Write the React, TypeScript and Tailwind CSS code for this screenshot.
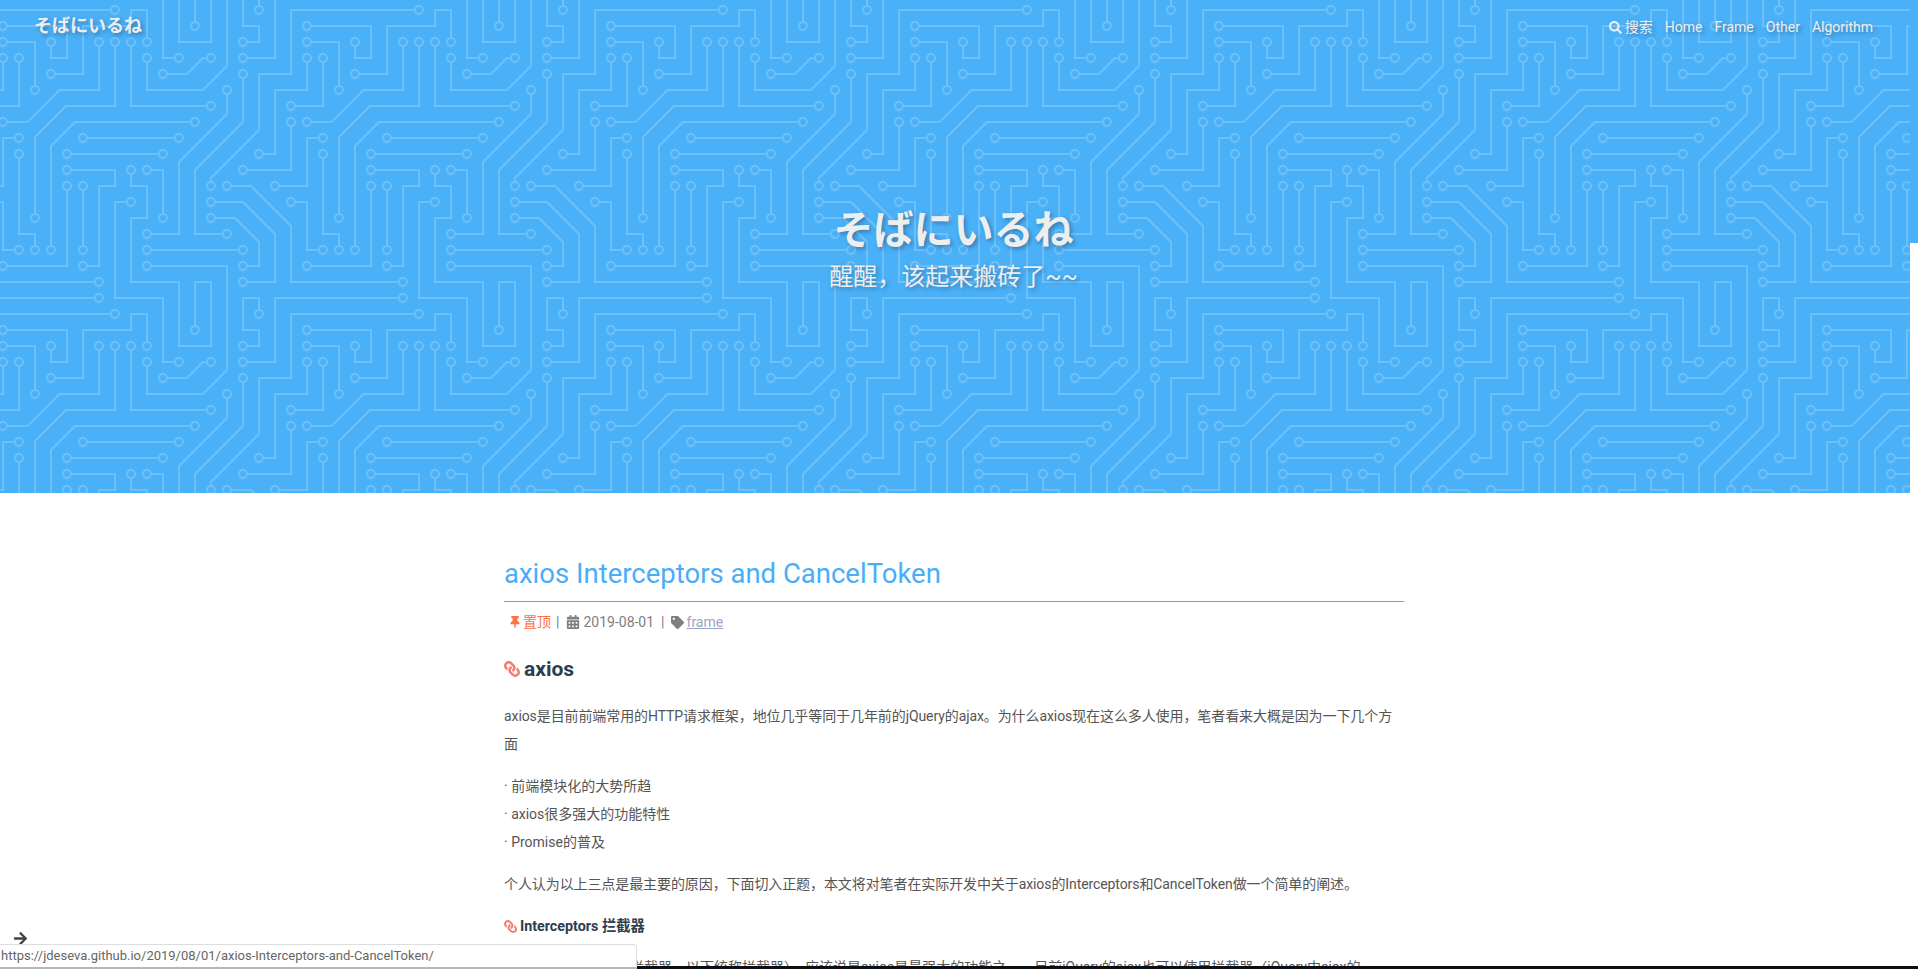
import { FaArrowRight, FaCalendarAlt, FaLink, FaSearch, FaTag, FaThumbtack } from "react-icons/fa";

const FONT = "font-['Roboto','Noto_Sans_CJK_SC',sans-serif]";
const JP_FONT = "font-['Noto_Sans_CJK_JP','Noto_Sans_CJK_SC',sans-serif]";
const SHADOW = "[text-shadow:2px_2px_4px_rgba(0,0,0,0.3)]";

const CIRCUIT =
  "M44.1 224a5 5 0 1 1 0 2H0v-2h44.1zm160 48a5 5 0 1 1 0 2H82v-2h122.1zm57.8-46a5 5 0 1 1 0-2H304v2h-42.1zm0 16a5 5 0 1 1 0-2H304v2h-42.1zm6.2-114a5 5 0 1 1 0 2h-86.2a5 5 0 1 1 0-2h86.2zm-256-48a5 5 0 1 1 0 2H0v-2h12.1zm185.8 34a5 5 0 1 1 0-2h86.2a5 5 0 1 1 0 2h-86.2zM258 12.1a5 5 0 1 1-2 0V0h2v12.1zm-64 208a5 5 0 1 1-2 0v-54.2a5 5 0 1 1 2 0v54.2zm48-198.2V80h62v2h-64V21.9a5 5 0 1 1 2 0zm16 16V64h46v2h-48V37.9a5 5 0 1 1 2 0zm-128 96V208h16v12.1a5 5 0 1 1-2 0V210h-16v-76.1a5 5 0 1 1 2 0zm-5.9-21.9a5 5 0 1 1 0 2H114v48H85.9a5 5 0 1 1 0-2H112v-48h12.1zm-6.2 130a5 5 0 1 1 0-2H176v-74.1a5 5 0 1 1 2 0V242h-60.1zm-16-64a5 5 0 1 1 0-2H114v48h10.1a5 5 0 1 1 0 2H112v-48h-10.1zM66 284.1a5 5 0 1 1-2 0V274H50v30h-2v-32h18v12.1zM236.1 176a5 5 0 1 1 0 2H226v94h48v32h-2v-30h-48v-98h12.1zm25.8-30a5 5 0 1 1 0-2H274v44.1a5 5 0 1 1-2 0V146h-10.1zm-64 96a5 5 0 1 1 0-2H208v-80h16v-14h-42.1a5 5 0 1 1 0-2H226v18h-16v80h-12.1zm86.2-210a5 5 0 1 1 0 2H272V0h2v32h10.1zM98 101.9V146H53.9a5 5 0 1 1 0-2H96v-42.1a5 5 0 1 1 2 0zM53.9 34a5 5 0 1 1 0-2H80V0h2v34H53.9zm60.1 3.9V66H82v64H69.9a5 5 0 1 1 0-2H80V64h32V37.9a5 5 0 1 1 2 0zM101.9 82a5 5 0 1 1 0-2H128V37.9a5 5 0 1 1 2 0V82h-28.1zm16-64a5 5 0 1 1 0-2H146v44.1a5 5 0 1 1-2 0V18h-26.1zm102.2 270a5 5 0 1 1 0 2H98v14h-2v-16h124.1zM242 149.9V160h16v34h-16v62h48v48h-2v-46h-48v-66h16v-30h-16v-12.1a5 5 0 1 1 2 0zM53.9 18a5 5 0 1 1 0-2H64V2H48V0h18v18H53.9zm112 32a5 5 0 1 1 0-2H192V0h50v2h-48v48h-28.1zm-48-48a5 5 0 0 1-9.8-2h2.07a3 3 0 1 0 5.66 0H178v34h-18V21.9a5 5 0 1 1 2 0V32h14V2h-58.1zm0 96a5 5 0 1 1 0-2H137l32-32h39V21.9a5 5 0 1 1 2 0V66h-40.17l-32 32H117.9zm28.1 90.1a5 5 0 1 1-2 0v-76.51L175.59 80H224V21.9a5 5 0 1 1 2 0V82h-49.59L146 112.41v75.69zm16 32a5 5 0 1 1-2 0v-99.51L184.59 96H300.1a5 5 0 0 1 3.9-3.9v2.07a3 3 0 0 0 0 5.66v2.07a5 5 0 0 1-3.9-3.9H185.41L162 121.41v98.69zm-144-64a5 5 0 1 1-2 0v-3.51l48-48V48h32V0h2v50H66v55.41l-48 48v2.69zM50 53.9v43.51l-48 48V208h26.1a5 5 0 1 1 0 2H0v-65.41l48-48V53.9a5 5 0 1 1 2 0zm-16 16V89.41l-34 34v-2.82l32-32V69.9a5 5 0 1 1 2 0zM12.1 32a5 5 0 1 1 0 2H9.41L0 43.41V40.6L8.59 32h3.51zm265.8 18a5 5 0 1 1 0-2h18.69l7.41-7.41v2.82L297.41 50H277.9zm-16 160a5 5 0 1 1 0-2H288v-71.41l16-16v2.82l-14 14V210h-28.1zm-208 32a5 5 0 1 1 0-2H64v-22.59L40.59 194H21.9a5 5 0 1 1 0-2H41.41L66 216.59V242H53.9zm150.2 14a5 5 0 1 1 0 2H96v-56.6L56.6 162H37.9a5 5 0 1 1 0-2h19.5L98 200.6V256h106.1zm-150.2 2a5 5 0 1 1 0-2H80v-46.59L48.59 178H21.9a5 5 0 1 1 0-2H49.41L82 208.59V258H53.9zM34 39.8v1.61L9.41 66H0v-2h8.59L32 40.59V0h2v39.8zM2 300.1a5 5 0 0 1 3.9 3.9H3.83A3 3 0 0 0 0 302.17V256h18v48h-2v-46H2v42.1zM34 241v63h-2v-62H0v-2h34v1zM17 18H0v-2h16V0h2v18h-1zm273-2h14v2h-16V0h2v16zm-32 273v15h-2v-14h-14v14h-2v-16h18v1zM0 92.1A5.02 5.02 0 0 1 6 97a5 5 0 0 1-6 4.9v-2.07a3 3 0 1 0 0-5.66V92.1zM80 272h2v32h-2v-32zm37.9 32h-2.07a3 3 0 0 0-5.66 0h-2.07a5 5 0 0 1 9.8 0zM5.9 0A5.02 5.02 0 0 1 0 5.9V3.83A3 3 0 0 0 3.83 0H5.9zm294.2 0h2.07A3 3 0 0 0 304 3.83V5.9a5 5 0 0 1-3.9-5.9zm3.9 300.1v2.07a3 3 0 0 0-1.83 1.83h-2.07a5 5 0 0 1 3.9-3.9z";

// centres of the pads, punched out of the traces above
const PADS = [
  [49, 225], [209, 273], [257, 225], [257, 241], [273, 129], [177, 129], [17, 81], [193, 113], [289, 113],
  [257, 17], [193, 225], [193, 161], [241, 17], [257, 33], [145, 225], [129, 129], [129, 113], [81, 161],
  [113, 241], [177, 161], [97, 177], [129, 225], [65, 289], [241, 177], [257, 145], [273, 193], [193, 241],
  [177, 145], [289, 33], [49, 145], [97, 97], [49, 33], [65, 129], [113, 33], [97, 81], [129, 33], [113, 17],
  [145, 65], [225, 289], [241, 145], [49, 17], [161, 49], [161, 17], [113, 97], [209, 17], [145, 193],
  [225, 17], [161, 225], [17, 161], [49, 49], [33, 209], [33, 65], [17, 33], [273, 49], [257, 209], [49, 241],
  [17, 193], [209, 257], [33, 161], [49, 257], [17, 177],
];
const PAD_HOLES = PADS.map(([x, y]) => `M${x} ${y + 3}a3 3 0 1 0 0-6 3 3 0 0 0 0 6z`).join("");

function CircuitPattern() {
  return (
    <svg className="absolute inset-0 h-full w-full" aria-hidden="true">
      <defs>
        <pattern id="circuit" width="304" height="304" x="194" y="25" patternUnits="userSpaceOnUse">
          <path d={CIRCUIT + PAD_HOLES} fill="#ffffff" fillOpacity="0.2" fillRule="evenodd" />
        </pattern>
      </defs>
      <rect width="100%" height="100%" fill="url(#circuit)" />
    </svg>
  );
}

function Hero() {
  return (
    <header className={`relative h-[493px] shrink-0 bg-[#4ab0f7] text-[#eeeeee] ${FONT}`}>
      <CircuitPattern />
      <div className={`relative flex items-start justify-between pl-[34px] pr-[37px] ${SHADOW}`}>
        <span className={`mt-[11px] text-[18px] font-bold leading-[26px] ${JP_FONT}`}>そばにいるね</span>
        <nav className="mt-[16px] flex gap-[12px] text-[14px] leading-[22px]">
          <span className="flex items-center gap-[3px]">
            <FaSearch className="h-[13px] w-[13px]" />
            搜索
          </span>
          <span>Home</span>
          <span>Frame</span>
          <span>Other</span>
          <span>Algorithm</span>
        </nav>
      </div>
      <div className={`relative mt-[163px] flex flex-col items-center pr-[3px] ${SHADOW}`}>
        <h1 className={`text-[40px] font-bold leading-[52px] ${JP_FONT}`}>そばにいるね</h1>
        <p className="mt-[7px] text-[24px] leading-[34px]">醒醒，该起来搬砖了~~</p>
      </div>
    </header>
  );
}

function Heading({ size, children }: { size: "lg" | "sm"; children: string }) {
  const large = size === "lg";
  return (
    <h2
      className={
        large
          ? "mt-[17px] flex items-center gap-[4px] text-[21px] font-bold leading-[32px] text-[#2c3e50]"
          : "mt-[14px] flex items-center gap-[3px] text-[14.3px] font-bold leading-[28px] text-[#2c3e50]"
      }
    >
      <FaLink className={large ? "h-[16px] w-[16px] -scale-x-100 text-[#f77b6f]" : "h-[13px] w-[13px] -scale-x-100 text-[#f77b6f]"} />
      {children}
    </h2>
  );
}

function Article() {
  return (
    <main className={`ml-[504px] w-[900px] pt-[60px] text-[14px] leading-[28px] text-[#555555] ${FONT}`}>
      <h1 className="border-b border-[#4aaef5] pt-[1px] pb-[7px] text-[27.5px] leading-[40px] text-[#49aef7]">
        axios Interceptors and CancelToken
      </h1>
      <div className="mt-[6px] flex items-center pl-[5px] text-[#808080]">
        <FaThumbtack className="h-[12px] w-[12px] text-[#ff7043]" />
        <span className="ml-[2px] text-[#ff7043]">置顶</span>
        <span className="mr-[7px] ml-[5px]">|</span>
        <FaCalendarAlt className="h-[14px] w-[14px]" />
        <span className="ml-[3px]">2019-08-01</span>
        <span className="mr-[6px] ml-[7px]">|</span>
        <FaTag className="h-[13px] w-[13px]" />
        <a className="ml-[3px] text-[#9aa5c4] underline">frame</a>
      </div>
      <Heading size="lg">axios</Heading>
      <p className="mt-[17px] tracking-[-0.09px]">
        axios是目前前端常用的HTTP请求框架，地位几乎等同于几年前的jQuery的ajax。为什么axios现在这么多人使用，笔者看来大概是因为一下几个方
        <br />
        面
      </p>
      <p className="mt-[14px]">
        · 前端模块化的大势所趋
        <br />
        · axios很多强大的功能特性
        <br />
        · Promise的普及
      </p>
      <p className="mt-[14px] tracking-[-0.09px]">
        个人认为以上三点是最主要的原因，下面切入正题，本文将对笔者在实际开发中关于axios的Interceptors和CancelToken做一个简单的阐述。
      </p>
      <Heading size="sm">Interceptors 拦截器</Heading>
      <p className="mt-[13px]">
        首先我们来介绍一下拦截器，以下统称拦截器），应该说是axios是最强大的功能之一，目前jQuery的ajax也可以使用拦截器（jQuery中ajax的
      </p>
    </main>
  );
}

function UrlStatus() {
  return (
    <>
      <FaArrowRight className="absolute bottom-[23px] left-[13px] h-[15px] w-[15px] text-[#444444]" />
      <div
        className={`absolute bottom-0 left-0 h-[25px] w-[637px] rounded-tr-[4px] border-t border-r border-b-2 border-[#dddddd] border-b-[#b8b8b8] bg-white pl-[1px] text-[13px] leading-[22px] text-[#666666] ${FONT}`}
      >
        https://jdeseva.github.io/2019/08/01/axios-Interceptors-and-CancelToken/
      </div>
    </>
  );
}

export default function App() {
  return (
    <div className="relative flex h-[969px] w-full flex-col overflow-hidden bg-white">
      <div className="flex min-h-0 flex-1">
        <div className="min-w-0 flex-1 overflow-hidden">
          <Hero />
          <Article />
        </div>
        {/* page scrollbar */}
        <div className="w-[8px] shrink-0 bg-white">
          <div className="h-[243px] bg-[#4ab0f7]" />
        </div>
      </div>
      {/* bottom edge of the window */}
      <div className="flex h-[3px] shrink-0 bg-[#0b0f14]">
        <div className="ml-[441px] w-[48px] bg-[#3a3a3a]" />
      </div>
      <UrlStatus />
    </div>
  );
}
